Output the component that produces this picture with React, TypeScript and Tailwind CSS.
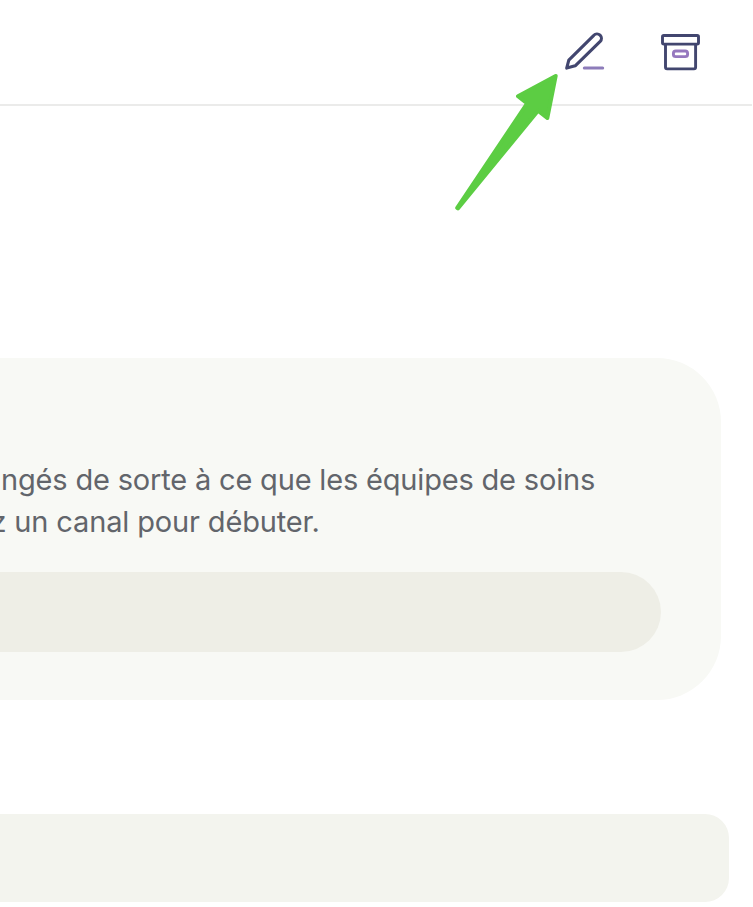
function PencilIcon() {
  return (
    <svg className="h-10 w-11" viewBox="562 31 44 40" fill="none" strokeLinecap="round" strokeLinejoin="round">
      <path d="M566.7 68.1L568.8 60.2L593.8 35.3A4.3 4.3 0 0 1 600.2 41.4L575.2 65.8Z" stroke="#42466f" strokeWidth="3.1" />
      <path d="M584.3 68H602.7" stroke="#8d7cba" strokeWidth="3" />
    </svg>
  );
}

function ArchiveIcon() {
  return (
    <svg className="h-10 w-10" viewBox="660 32 40 40" fill="none" strokeLinejoin="round">
      <rect x="662.5" y="35.5" width="36" height="8.6" rx="1.3" stroke="#42466f" strokeWidth="2.9" />
      <path d="M665.5 44V67.3Q665.5 68.9 667.1 68.9H694Q695.6 68.9 695.6 67.3V44" stroke="#42466f" strokeWidth="2.9" />
      <rect x="673.4" y="51" width="14.2" height="5.6" rx="2.4" stroke="#9678bf" strokeWidth="2.9" />
    </svg>
  );
}

function Arrow() {
  return (
    <svg className="pointer-events-none absolute left-[440px] top-[60px] h-40 w-[140px]" viewBox="440 60 140 160">
      <path
        d="M555.7 75.9L518 96.2L527.2 103.3L457.2 207.9L457.9 208.4L538 110.7L547.3 118L555.7 75.9Z"
        fill="#5ccd43"
        stroke="#5ccd43"
        strokeWidth="4"
        strokeLinejoin="round"
      />
    </svg>
  );
}

export default function App() {
  return (
    <div className="relative h-[907px] w-[753px] overflow-hidden bg-white font-['Inter','Liberation_Sans',sans-serif]">
      <header className="mr-px flex h-[106px] items-start justify-end gap-[54px] border-b-2 border-[#ebebea] pr-[52px]">
        <button className="mt-[31px]" aria-label="Modifier">
          <PencilIcon />
        </button>
        <button className="mt-8" aria-label="Archiver">
          <ArchiveIcon />
        </button>
      </header>
      <main className="pt-[252px]">
        <section className="mr-[32.5px] h-[342px] rounded-r-[64px] bg-[#f8f9f5] pt-[101px]">
          <div className="whitespace-nowrap text-[29px] leading-[42px] text-[#62656b]">
            <p className="pl-px tracking-[-0.18px]">ngés de sorte à ce que les équipes de soins</p>
            <p className="-ml-[9.5px] tracking-[-0.15px]">z un canal pour débuter.</p>
          </div>
          <div className="mr-[59.5px] mt-[29px] h-20 rounded-r-full bg-[#eeeee6]" />
        </section>
        <div className="mr-[24.5px] mt-[114px] h-[88px] rounded-r-3xl bg-[#f3f4ee]" />
      </main>
      <Arrow />
    </div>
  );
}
